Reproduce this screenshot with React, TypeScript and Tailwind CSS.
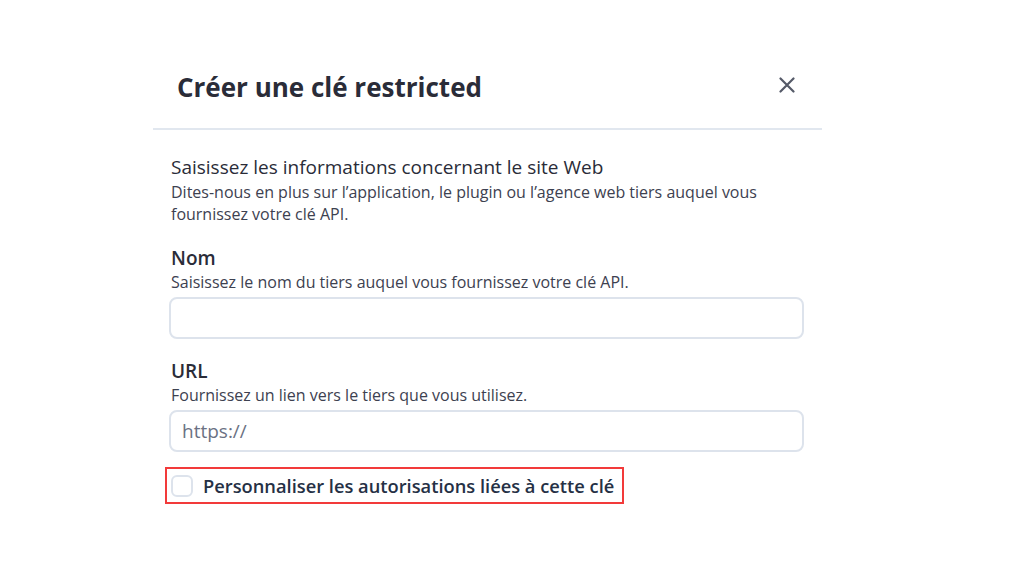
import React from "react";

export default function App() {
  return (
    <div className="w-[1024px] h-[580px] bg-white" style={{ fontFamily: '"Open Sans", "Noto Sans", sans-serif' }}>
      <div className="ml-[153px] w-[669px] pt-[68px]">
        <div className="flex items-center justify-between pl-[24px] pr-[27px] h-[38px]">
          <h1 className="text-[26px] leading-[38px] font-bold text-[#2a2c38]">Créer une clé restricted</h1>
          <button className="w-[16px] h-[16px] -mt-[4px] flex items-center justify-center text-[#555a68]" aria-label="Fermer">
            <svg width="16" height="16" viewBox="0 0 16 16" fill="none" stroke="currentColor" strokeWidth="2.2" strokeLinecap="round">
              <path d="M1.5 1.5L14.5 14.5M14.5 1.5L1.5 14.5" />
            </svg>
          </button>
        </div>
        <div className="mt-[22px] h-[2px] bg-[#e1e7ef]" />
        <div className="pl-[18px] pr-[17px] pt-[24px]">
          <h2 className="text-[19px] leading-[26px] font-medium text-[#2a2c38]">Saisissez les informations concernant le site Web</h2>
          <p className="mt-[1px] text-[16px] leading-[22px] text-[#3d4150]">
            Dites-nous en plus sur l’application, le plugin ou l’agence web tiers auquel vous fournissez votre clé API.
          </p>
          <div className="mt-[20px]">
            <div className="text-[19px] leading-[26px] font-semibold text-[#2a2c38]">Nom</div>
            <div className="text-[16px] leading-[22px] text-[#3d4150]">Saisissez le nom du tiers auquel vous fournissez votre clé API.</div>
            <input className="mt-[4px] -ml-[2px] w-[635px] h-[42px] rounded-[8px] border-2 border-[#dde3ec] px-[11px] text-[19px] outline-none" />
          </div>
          <div className="mt-[19px]">
            <div className="text-[19px] leading-[26px] font-semibold text-[#2a2c38]">URL</div>
            <div className="text-[16px] leading-[22px] text-[#3d4150]">Fournissez un lien vers le tiers que vous utilisez.</div>
            <input placeholder="https://" className="mt-[4px] -ml-[2px] w-[635px] h-[42px] rounded-[8px] border-2 border-[#dde3ec] px-[11px] text-[19px] text-[#2a2c38] placeholder:text-[#6b7183] outline-none" />
          </div>
          <div className="mt-[15px] -ml-[6px] inline-flex items-center gap-[10px] border-2 border-[#f23a3a] pl-[4px] pr-[8px] h-[37px]">
            <span className="w-[22px] h-[22px] rounded-[6px] border-2 border-[#dde3ec] bg-white" />
            <span className="text-[18.3px] leading-[26px] font-semibold text-[#253045]">Personnaliser les autorisations liées à cette clé</span>
          </div>
        </div>
      </div>
    </div>
  );
}
